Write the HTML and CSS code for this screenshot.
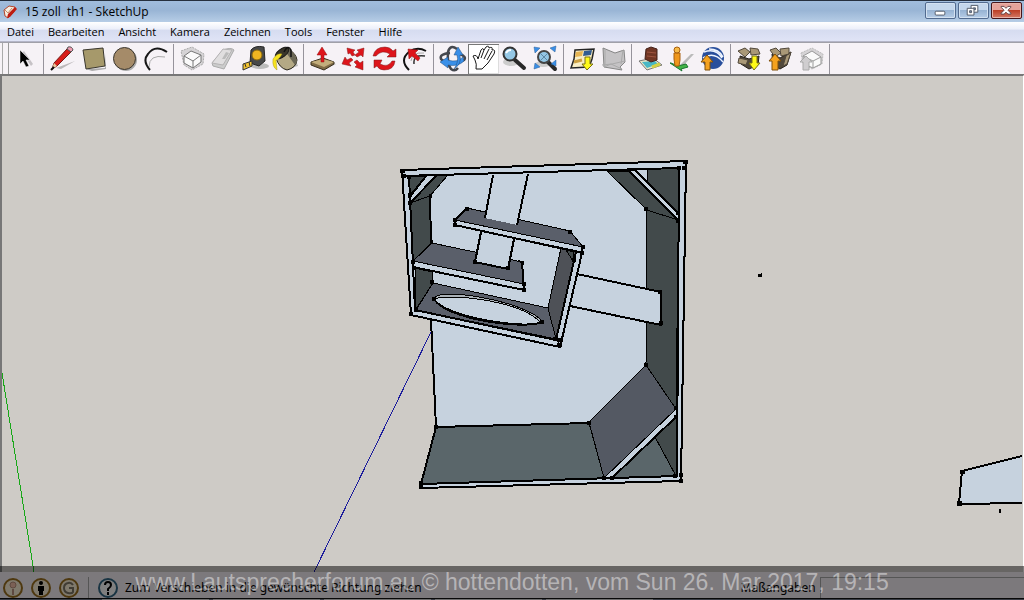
FILE: index.html
```html
<!DOCTYPE html>
<html lang="de">
<head>
<meta charset="utf-8">
<title>15 zoll th1 - SketchUp</title>
<link rel="stylesheet" href="styles.css">
</head>
<body>
<header class="titlebar">
  <svg class="app-icon" viewBox="0 0 16 16"><path d="M2 6 7 2l6 1-1 5-6 6-3-2z" fill="#f5eee2" stroke="#b5452a"/><path d="m5 14 1-4 7-7 2 2-7 8z" fill="#bd1d12"/><path d="m3 6 3 3 4-5" stroke="#c98c62" fill="none"/></svg>
  <h1 class="window-title">15 zoll&nbsp; th1 - SketchUp</h1>
  <div class="window-buttons">
    <button class="win-btn" aria-label="Minimieren"><svg viewBox="0 0 30 16"><rect x="9.500" y="8.500" width="10" height="4" rx="1" fill="#fff" stroke="#535b69"/></svg></button>
    <button class="win-btn" aria-label="Wiederherstellen"><svg viewBox="0 0 30 16"><path d="M12.500 2.500h7v7h-7z" fill="#fff" stroke="#535b69"/><path d="M15 5h2v2h-2z" fill="#7d94b4" stroke="#535b69"/><path d="M8.500 5.500h7v7h-7z" fill="#fff" stroke="#535b69"/><path d="M11 8h2v2h-2z" fill="#7d94b4" stroke="#535b69"/></svg></button>
    <button class="win-btn close" aria-label="Schließen"><svg viewBox="0 0 30 16"><path d="M9.500 3.500h3l2 2 2-2h3v1l-3 3 3 3v1h-3l-2-2-2 2h-3v-1l3-3-3-3z" fill="#fff" stroke="#634548"/></svg></button>
  </div>
</header>
<nav class="menubar">
  <button>Datei</button><button>Bearbeiten</button><button>Ansicht</button><button>Kamera</button><button>Zeichnen</button><button>Tools</button><button>Fenster</button><button>Hilfe</button>
</nav>
<div class="toolbar" role="toolbar">
  <div class="tool-group">
    <button class="tool" aria-label="Auswählen"><svg viewBox="0 0 31 30"><path d="m12 9 9 13 2-2-9-13z" fill="#c6c2c6"/><path d="M10 6v14l3-3 3 6 3-1-3-6h4z" fill="#000" stroke="#fff" stroke-width=".5"/></svg></button>
  </div>
  <div class="tool-group">
    <button class="tool" aria-label="Linie"><svg viewBox="0 0 31 30"><path d="m9 24 19-7-14 8z" fill="#bbb8ba"/><path d="m5 25 2-6L20 5l4 3L10 22z" fill="#d81e1a" stroke="#741c18"/><path d="m5 25 2-6 3 3z" fill="#e8cba0"/><path d="m20 5 1-2q4-1 5 3l-2 2z" fill="#ef9bb0" stroke="#555"/><path d="m4 26 3-3" stroke="#111" stroke-width="2"/></svg></button>
    <button class="tool" aria-label="Rechteck"><svg viewBox="0 0 31 30"><path d="m8 25 19-1V10l1 15-14 2z" fill="#aaa"/><path d="m5 6 20-2 2 18-19 3z" fill="#a6996b" stroke="#39362d"/></svg></button>
    <button class="tool" aria-label="Kreis"><svg viewBox="0 0 31 30"><circle cx="17" cy="16" r="11" fill="#aaa"/><circle cx="15.500" cy="14.500" r="11" fill="#a58b69" stroke="#39352e"/></svg></button>
    <button class="tool" aria-label="Bogen"><svg viewBox="0 0 31 30"><path d="M9 23Q9 10 25 13" fill="none" stroke="#aaa"/><path d="M10 26q-8-9-2-16Q15 0 27 8" fill="none" stroke="#171717" stroke-width="2"/></svg></button>
  </div>
  <div class="tool-group">
    <button class="tool" aria-label="Komponente"><svg viewBox="0 0 31 30"><path d="m4 7 11-4 12 7-1 10-11 6-8-5z" fill="#d5d3d5" stroke="#aaa" stroke-dasharray="2 1"/><path d="m7 12 7-5 10 4v7l-8 6-9-5z" fill="#fafafa" stroke="#777"/><path d="m7 12 9 5 8-6m-8 6v7" fill="none" stroke="#777"/></svg></button>
    <button class="tool" aria-label="Radierer"><svg viewBox="0 0 31 30"><path d="m4 19 11-13q8-3 11 0L16 25l-11-3z" fill="#ccc" stroke="#aaa"/><path d="m4 19 11 2 9-15-9-1z" fill="#e0dedf" stroke="#b5b3b4"/><path d="m14 15 4-7 3 1-4 6z" fill="#bbb"/></svg></button>
    <button class="tool" aria-label="Maßband"><svg viewBox="0 0 31 30"><ellipse cx="21" cy="22" rx="9" ry="3" fill="#bbb"/><path d="M12 6q4-5 13-3l1 14-6 5-9-3z" fill="#48494a" stroke="#252525"/><circle cx="18" cy="11" r="5" fill="#eeb522" stroke="#87670c"/><path d="m4 20 9-3v5l-9 4z" fill="#f2c330" stroke="#333"/><path d="m6 20 1 3m3-5 1 4" stroke="#333"/></svg></button>
    <button class="tool" aria-label="Farbeimer"><svg viewBox="0 0 31 30"><path d="m17 25 11-3-3-8z" fill="#bbb"/><path d="m6 14 12-9q8 4 9 11-1 8-10 10-8-2-11-12z" fill="#b4a985" stroke="#28251c"/><path d="m15 7 10 14 2-3q-1-10-9-13z" fill="#6b6756"/><ellipse cx="12" cy="9" rx="8" ry="4" transform="rotate(-37 12 9)" fill="#383529" stroke="#171717"/><path d="M14 8q4-8 7-2v7" fill="none" stroke="#111" stroke-width="1.500"/><path d="M12 10q-4 7-6 6l1 10q-5-3-4-11 4-6 9-5z" fill="#f7e31f" stroke="#a69624" stroke-width=".5"/></svg></button>
  </div>
  <div class="tool-group">
    <button class="tool" aria-label="Drücken/Ziehen"><svg viewBox="0 0 31 30"><path d="m17 26 12-6-5-1z" fill="#bbb"/><path d="m4 18 12-4 11 4v2l-10 6-13-5z" fill="#806c46" stroke="#39301f"/><path d="m4 18 12-3 11 3-10 5z" fill="#c3ae7c"/><path d="M14 18v-7h-4l5-8 5 8h-3v7z" fill="#dd151b" stroke="#931010" stroke-width=".5"/></svg></button>
    <button class="tool" aria-label="Verschieben"><svg viewBox="0 0 31 30"><g fill="#dd151b" stroke="#861919" stroke-width=".5"><path d="m9 4 8 2-2 2 2 3-3 1-2-3-2 1zM26 4l-1 9-2-2-4 2-2-2 4-3-2-2zM4 20l3-7 2 3 4-2 2 2-4 3 2 3zM25 26l-8-3 2-2-3-3 3-2 3 3 3-2z"/></g></svg></button>
    <button class="tool" aria-label="Drehen"><svg viewBox="0 0 31 30"><path d="M4 12q2-9 12-9 5 0 8 4l3-2v8h-9l3-3q-8-5-14 2zM26 17q-1 9-11 9-5 0-7-4l-3 2v-8h8l-2 4q8 4 12-3z" fill="#dd151b" stroke="#7b191b" stroke-width=".5"/></svg></button>
    <button class="tool" aria-label="Versatz"><svg viewBox="0 0 31 30"><path d="M9 26Q-1 16 9 8q8-6 17-1" fill="none" stroke="#111" stroke-width="2"/><path d="M14 20q-1-10 11-8" fill="none" stroke="#333" stroke-width="1.500"/><path d="M11 17q1-9 13-8" fill="none" stroke="#aaa"/><path d="m18 17-6-5-3 3-1-10 10 1-3 3 5 5z" fill="#dd151b" stroke="#861919" stroke-width=".5"/></svg></button>
  </div>
  <div class="tool-group">
    <button class="tool" aria-label="Rotieren"><svg viewBox="0 0 31 30"><path d="M13 9Q2 10 4 15q2 3 9 3M23 10q7 3 4 6l-4 2" fill="none" stroke="#45484e" stroke-width="2.500"/><path d="M20 5q-7-5-9 3-1 12 3 17 4 3 7-1" fill="none" stroke="#45484e" stroke-width="2.500"/><path d="m3 18 8-5v3q9 3 15-3l1 4q-6 6-16 4v3z" fill="#398fe8" stroke="#214a7a" stroke-width=".5"/><path d="M17 25q5-7 3-14h-3l4-8 5 8h-3q2 9-6 14z" fill="#398fe8" stroke="#214a7a" stroke-width=".5"/></svg></button>
    <button class="tool active" aria-label="Schwenken"><svg viewBox="0 0 31 30"><path d="M8 25q1-5-1-9l-2-4q4-2 5 3l3-9q2-3 3 0l2-3q3-2 3 1 4-2 3 2 4-1 2 4l-6 9-6 6z" fill="#fff" stroke="#171717"/><path d="m13 14 3-8m0 9 5-10m-2 11 5-9" fill="none" stroke="#171717"/></svg></button>
    <button class="tool" aria-label="Zoom"><svg viewBox="0 0 31 30"><ellipse cx="12" cy="18" rx="8" ry="4" fill="#ccc"/><path d="m16 16 9 8" stroke="#292929" stroke-width="4" stroke-linecap="round"/><circle cx="11" cy="10" r="6.500" fill="#94c7e5" stroke="#333" stroke-width="2"/><path d="M7 9q2-3 5-3" fill="none" stroke="#fff" stroke-width="2"/></svg></button>
    <button class="tool" aria-label="Alles zeigen"><svg viewBox="0 0 31 30"><ellipse cx="13" cy="20" rx="8" ry="3" fill="#ccc"/><path d="m18 18 7 7" stroke="#292929" stroke-width="4" stroke-linecap="round"/><circle cx="14" cy="13" r="6" fill="#94c7e5" stroke="#444" stroke-width="2"/><path d="m10 9 8 8m0-8-8 8" stroke="#5d88a4"/><path d="M4 3l6 1-5 5zM20 4l6-2-1 6zM4 25l1-6 5 4zM26 16v6l-5-2z" fill="#398fe8" stroke="#315f94" stroke-width=".5"/></svg></button>
  </div>
  <div class="tool-group">
    <button class="tool" aria-label="Aktuelle Ansicht abrufen"><svg viewBox="0 0 31 30"><path d="m8 6 19-1-2 10-3 8-18 1 3-9z" fill="#f8edc5" stroke="#242424" stroke-width="1.500"/><path d="m9 8 7-1-1 5-7 1z" fill="#e6b452"/><path d="m17 7 8-1-1 5-8 1z" fill="#315b91"/><path d="m7 18 8-2" stroke="#cb9f42" stroke-width="3"/><path d="M18 13h5v7h3l-6 6-5-6h3z" fill="#fffa18" stroke="#787117"/></svg></button>
    <button class="tool" aria-label="Gelände"><svg viewBox="0 0 31 30"><path d="m5 4 12 5 9-3 1 12-5 5 2 3-18-3z" fill="#c5c3c5" stroke="#858585"/><path d="m4 21 10-1 13-3M7 5v18M25 6l-2 14m-17 3 7-3 11 5" fill="none" stroke="#aaa"/></svg></button>
  </div>
  <div class="tool-group">
    <button class="tool" aria-label="Gebäude"><svg viewBox="0 0 31 30"><path d="m4 17 14-3 9 7-15 5z" fill="#e7e5c5" stroke="#777"/><path d="m7 18 13-1 3 3-11 4z" fill="#48b7c5"/><path d="m17 23 8-3" stroke="#d5d245" stroke-width="3"/><path d="m11 5 5-2 6 2v11l-6 2-6-3z" fill="#713624" stroke="#45221a"/><path d="m12 8 9 1m-9 3 9 1" stroke="#a05540"/></svg></button>
    <button class="tool" aria-label="Street View"><svg viewBox="0 0 31 30"><path d="m14 21 11-11h3L17 22z" fill="#bbb"/><path d="m5 19 7 3 8-2 2 3-7 2 1 2-12-8z" fill="#43b449" stroke="#18752d"/><path d="M8 9h6v7l-1 6H9l-1-7z" fill="#ee961b" stroke="#a75e0c"/><circle cx="11" cy="6" r="3" fill="#f7ba46" stroke="#a75e0c"/></svg></button>
    <button class="tool" aria-label="Google Earth"><svg viewBox="0 0 31 30"><circle cx="16" cy="14" r="11" fill="#294f9c"/><path d="M7 8q12-4 18 6M6 14q11-7 20 4M12 5q10 0 14 8" fill="none" stroke="#eef4ff" stroke-width="1.500"/><path d="M8 26v-8H4l6-7 6 7h-3v8z" fill="#f5a21e" stroke="#80500b"/></svg></button>
  </div>
  <div class="tool-group">
    <button class="tool" aria-label="Modelle abrufen"><svg viewBox="0 0 31 30"><path d="m6 12 9 3 10-3-1 9-9 4-8-5z" fill="#51483b" stroke="#252018"/><path d="m4 7 7-3 5 4-5 5zM16 4l8 1 2 5-9 1zM5 14l-1 5 8 2 2-5z" fill="#a99877" stroke="#51483b"/><path d="M18 12h5v7h3l-6 7-5-7h3z" fill="#fffa18" stroke="#787117"/></svg></button>
    <button class="tool" aria-label="Modell freigeben"><svg viewBox="0 0 31 30"><path d="m7 10 8 4 11-6-4 13-7 4-7-4z" fill="#51483b" stroke="#252018"/><path d="m5 6 6-2 5 5-6 4zM15 5l9-1v6l-8 2zM21 12l5-4-4 12-4 2z" fill="#a99877" stroke="#51483b"/><path d="M7 26v-9H4l6-7 6 7h-3v9z" fill="#f5a21e" stroke="#80500b"/></svg></button>
    <button class="tool" aria-label="Komponente freigeben"><svg viewBox="0 0 31 30"><path d="m5 9 11-5 11 6-1 10-10 5-9-5z" fill="#d5d3d5" stroke="#bbb" stroke-dasharray="2 1"/><path d="m7 12 9-5 9 6v7l-8 4-9-4z" fill="#fafafa" stroke="#999"/><path d="m7 12 10 5 8-4m-8 4v7" fill="none" stroke="#999"/><path d="M7 26v-8H4l6-6 6 6h-3v8z" fill="#cfcdcf" stroke="#aaa"/></svg></button>
  </div>
</div>
<main class="workspace">
  <svg class="drawing" viewBox="2 76 1021 496" preserveAspectRatio="xMidYMid slice">
    <path d="m2 373 32 199" stroke="#18a818"/>
    <path d="m431 332-117 240" stroke="#1d1d9c"/>
    <g stroke="#000" stroke-width="1" stroke-linejoin="round">
      <path d="m402 170 284-9-5 320-261 7 1-4 15-57-5-107-20-5z" fill="#c6d2de" stroke="none"/>
      <!-- right side and braces -->
      <path d="m647 169 32-1-3 242-30-45z" fill="#424a4b"/>
      <path d="M607 171h21l50 49-31-10z" fill="#424a4b"/>
      <path d="M628 170h7l44 43v7z" fill="#c6d2de"/>
      <path d="M635 169h12v12z" fill="#c6d2de"/>
      <path d="m577 274 84 18v33l-91-19z" fill="#c6d2de"/>
      <!-- floor -->
      <path d="m436 427 153-4 15 55-183 6z" fill="#5a666a"/>
      <path d="m589 422 57-57 30 44-72 69z" fill="#545963"/>
      <path d="m655 437 21-20v59z" fill="#424a4b"/>
      <path d="m612 478 43-41 21 39z" fill="#5a666a"/>
      <path d="m604 478 72-69v8l-64 61z" fill="#c6d2de"/>
      <!-- left side and brace -->
      <path d="m410 203 20-8 1 48-18 18z" fill="#424a4b"/>
      <path d="m415 268 17 4 1 11-17 26z" fill="#424a4b"/>
      <path d="m437 175 10 1-17 20-20 7z" fill="#424a4b"/>
      <path d="M409 176h17l-16 19z" fill="#424a4b"/>
      <!-- inner shelves -->
      <path d="m432 243 90 19 2 22-111-23z" fill="#5a5f6a"/>
      <path d="m413 261 111 23v6l-111-23z" fill="#c6d2de"/>
      <path d="m481 231 33 7-6 31-33-7z" fill="#c6d2de"/>
      <path d="m467 208 103 23 13 16-128-27z" fill="#5a5f6a"/>
      <path d="m455 220 128 27-1 5-127-27z" fill="#c6d2de"/>
      <path d="m493 175-8 43 32 7 11-51z" fill="#c6d2de" stroke="none"/>
      <path d="m433 283 115 25 8 31-140-29z" fill="#5a5f6a"/>
      <path d="M434 299c2-13 93 2 109 23-18 9-98-4-109-23z" fill="#aab1b7"/>
      <path d="M434 299c18-6 88 2 107 24-27 5-97-8-107-24z" fill="#c6d2de"/>
      <path d="m561 248 15 4-20 87-8-31z" fill="#4e5157"/>
      <path d="m576 252 6 1-21 93-5-7z" fill="#c6d2de"/>
      <path d="m574 252-1 9-7-11z" fill="#424a4b"/>
    </g>
    <g fill="none" stroke="#000" stroke-width="2">
      <path d="m402 170 284-9-5 320-261 7v-4m-18-314 9 145 149 32 22-94"/>
      <path d="m402 176 277-8-2 308-256 8 15-57-5-107M409 176l6 134 141 30 20-88M436 427l153-4"/>
      <path d="m455 220v5l127 28v-6M413 267l111 23-2-28-4-1M467 208l-12 12M475 262l33 7m-27-37-6 30m39-23-6 30M493 175l-8 43m43-44-11 51M577 274l84 18v33l-91-19M430 196l1 47M628 170l50 50M634 169l45 45M426 176l-17 22M437 175l-27 28M612 478l64-61"/>
      <path d="M434 299c12 20 88 31 109 23"/>
    </g>
    <g class="vertices" stroke="#000" stroke-width="4">
      <path d="M400 171h5M683 162h5M682 168h5M677 168h4M402 176h4M407 177h4M408 203h4M408 195h4M429 196h3M430 242h3M411 262h4M412 268h4M409 314h4M414 310h4M430 282h4M465 209h4M453 220h4M453 225h4M568 232h4M581 247h4M580 253h4M572 260h4M473 262h4M506 268h4M522 284h4M522 290h4M521 263h3M553 339h5M557 345h5M558 340h5M432 299h4M540 322h4M658 292h4M659 323h4M644 209h4M676 213h4M676 221h4M644 365h4M674 408h4M674 417h4M673 476h4M679 475h4M679 481h4M602 478h4M610 478h4M587 423h4M434 427h4M419 483h4M419 487h4"/>
    </g>
    <path d="m962 471 60-15v48l-63 1z" fill="#c6d2de" stroke="none"/>
    <path d="m1022 456-60 15-3 33 63-1" fill="none" stroke="#000" stroke-width="2"/>
    <path d="M960 470h5v4h-5zM957 501h5v5h-5zM758 274h3v3h-3zM761 273h1v4h-1zM999 509h2v4h-2z"/>
  </svg>
</main>
<footer class="statusbar">
  <div class="status-icons">
    <svg viewBox="0 0 22 22"><circle cx="11" cy="11" r="9" fill="#fff2d8" stroke="#9c701e" stroke-width="2"/><path d="M10 12h2v6h-2z" fill="#bd9281"/><circle cx="11" cy="8" r="3" fill="#f6c0aa" stroke="#bd9281"/></svg>
    <svg viewBox="0 0 22 22"><circle cx="11" cy="11" r="9" fill="#fff2d8" stroke="#9c701e" stroke-width="2"/><circle cx="11" cy="6" r="2"/><path d="M8 9h6v5h-1v4H9v-4H8z"/></svg>
    <svg viewBox="0 0 22 22"><circle cx="11" cy="11" r="9" fill="#fff2d8" stroke="#9c701e" stroke-width="2"/><path d="M15 8q-2-3-5-2-4 1-4 5t4 5q4 1 5-1v-4h-4" fill="none" stroke="#817968" stroke-width="2"/></svg>
  </div>
  <button class="help" aria-label="Hilfe"><svg viewBox="0 0 22 22"><circle cx="11" cy="11" r="9" fill="#fff" stroke="#326886" stroke-width="2"/><path d="M8 8q0-3 3-3t3 3q0 2-3 4v2m0 1v3" fill="none" stroke="#000" stroke-width="2"/></svg></button>
  <p class="hint">Zum Verschieben in die gewünschte Richtung ziehen</p>
  <label class="measure-label" for="measure">Maßangaben</label>
  <input class="measure" id="measure" type="text">
</footer>
<div class="taskbar"><span></span><span></span><span></span><span></span><span></span></div>
<div class="watermark">www.Lautsprecherforum.eu © hottendotten, vom Sun 26. Mar 2017, 19:15</div>
</body>
</html>
```
FILE: styles.css
```css
* { box-sizing: border-box; }
body {
  margin: 0;
  height: 100vh;
  display: flex;
  flex-direction: column;
  overflow: hidden;
  position: relative;
  background: #f6f2f6;
  font: 12px/16px "Open Sans", "Noto Sans", sans-serif;
  color: #000;
}
button { font: inherit; color: inherit; border: 0; background: none; padding: 0; }
svg { display: block; }
.titlebar {
  flex: none;
  height: 22px;
  display: flex;
  align-items: center;
  padding: 0 2px;
  border-top: 1px solid #26303e;
  background: linear-gradient(#a1bddd, #99b5d5 45%, #b6cde6);
}
.app-icon { width: 16px; height: 16px; }
.window-title { margin: 0 auto 0 7px; font-size: 12px; font-weight: 400; }
.window-buttons { display: flex; gap: 2px; align-self: flex-start; padding-top: 1px; }
.win-btn {
  width: 31px;
  height: 17px;
  border: 1px solid #526b8f;
  border-radius: 2px;
  background: linear-gradient(#c4d7ec 45%, #97b3d3 50%, #b6cde6);
  box-shadow: inset 0 0 0 1px #d3e1f1;
}
.win-btn.close { border-color: #47151b; background: linear-gradient(#e6a29a 45%, #bd3f27 50%, #d47966); box-shadow: inset 0 0 0 1px #e8b3a9; }
.menubar {
  flex: none;
  height: 20px;
  display: flex;
  gap: 14px;
  padding: 0 7px;
  border-bottom: 1px solid #b4b5c7;
  background: linear-gradient(#fff, #edf0fa 35%, #d6dcf0 45%, #e0e4f6);
  font-size: 11px;
}
.toolbar {
  flex: none;
  height: 33px;
  display: flex;
  align-items: center;
  padding-left: 7px;
  border-top: 1px solid #a0a0a8;
  border-bottom: 1px solid #777;
  background: linear-gradient(90deg, transparent 2px, #aaa 2px 3px, transparent 3px 8px, #999 8px 9px, transparent 9px), #f6f2f6;
}
.tool-group { display: flex; padding: 0 2px 0 3px; border-right: 1px solid #96939b; }
.tool { width: 31px; height: 30px; }
.tool svg { width: 31px; height: 30px; }
.tool.active { background: #fff; box-shadow: inset 1px 1px #777, inset -1px -1px #ddd; }
.workspace { flex: 1; min-height: 0; background: #cecbc6; border: solid #777; border-width: 1px 1px 0 2px; border-right-color: #fff; }
.drawing { width: 100%; height: 100%; shape-rendering: crispEdges; }
.statusbar { flex: none; height: 26px; display: flex; align-items: center; padding: 5px 0 0 2px; background: #f8f3f8; font-family: "Noto Sans", sans-serif; }
.status-icons { display: flex; gap: 6px; padding-right: 8px; border-right: 1px solid #aaa; }
.status-icons svg, .help svg { width: 22px; height: 22px; }
.help { margin-left: 8px; }
.hint { margin: 0 auto 0 6px; }
.measure { width: 20%; height: 22px; margin-left: 4px; border: 1px solid #aaa; border-width: 1px 0 0 1px; background: #f8f3f8; }
.taskbar { flex: none; height: 2px; padding-left: 10%; display: flex; gap: 4px; background: #717888; border-top: 1px solid #111; }
.taskbar span { width: 107px; background: #ddd; }
.watermark {
  position: absolute;
  left: 0;
  right: 0;
  bottom: 0;
  height: 34px;
  background: rgb(0 0 0 / 50%);
  color: rgb(255 255 255 / 45%);
  font: 23px/32px "Liberation Sans", sans-serif;
  text-align: center;
  white-space: nowrap;
  pointer-events: none;
}
```
